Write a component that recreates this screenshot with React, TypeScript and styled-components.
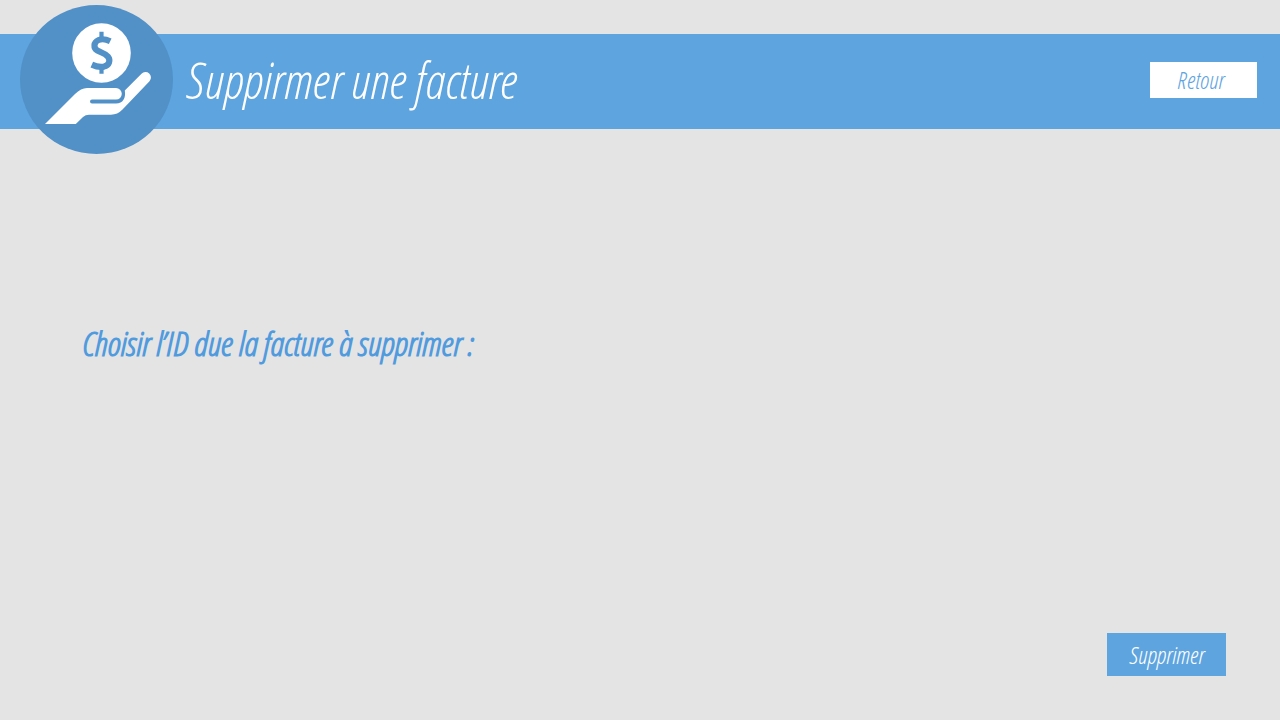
import React from 'react';
import styled, { createGlobalStyle } from 'styled-components';

const GlobalStyle = createGlobalStyle`
  *, *::before, *::after { box-sizing: border-box; }
  body {
    margin: 0;
    background: #e4e4e4;
    font-family: "Open Sans Condensed Light", "Roboto Condensed", "Liberation Sans", sans-serif;
    font-style: italic;
  }
`;

const Page = styled.div`
  display: flex;
  flex-direction: column;
  min-height: 100vh;
  padding-top: 34px;
`;

const Header = styled.header`
  display: flex;
  align-items: center;
  gap: 13px;
  min-height: 95px;
  padding: 0 23px 4px 20px;
  background: #5ea4df;
`;

const Logo = styled.svg`
  flex: none;
  width: 153px;
  height: 149px;
  margin: -29px 0;
`;

const Title = styled.h1`
  flex: 1;
  margin: 0;
  color: #fff;
  font-size: 50px;
  font-weight: 400;
  line-height: 60px;
`;

const Button = styled.button<{ $variant: 'light' | 'solid' }>`
  flex: none;
  width: ${({ $variant }) => ($variant === 'light' ? 107 : 119)}px;
  height: ${({ $variant }) => ($variant === 'light' ? 36 : 43)}px;
  padding: ${({ $variant }) => ($variant === 'light' ? '0 6px 0 0' : '0')};
  border: 0;
  background: ${({ $variant }) => ($variant === 'light' ? '#fff' : '#5ea4df')};
  color: ${({ $variant }) => ($variant === 'light' ? '#5ea4df' : '#fff')};
  font: inherit;
  font-size: 24px;
  line-height: 32px;
  cursor: pointer;
`;

const Main = styled.main`
  flex: 1;
  padding: 196px 82px 24px;
`;

const Prompt = styled.p`
  margin: 0;
  color: #509ade;
  font-size: 34px;
  font-weight: 600;
  line-height: 36px;
`;

const Actions = styled.footer`
  display: flex;
  justify-content: flex-end;
  padding: 0 54px 44px;
`;

function InvoiceLogo() {
  return (
    <Logo viewBox="20 5 153 149" aria-hidden="true">
      <ellipse cx="96.5" cy="79.5" rx="76.5" ry="74.5" fill="#5191c7" />
      <ellipse cx="101.5" cy="53" rx="29.3" ry="29.8" fill="#fff" />
      <g fill="none" stroke="#5191c7">
        <path
          d="M110.2 41.2C106 39.2 101.8 38.7 98.6 40C93.4 42.2 93.2 48 97.5 50.6C100.6 52.4 105.3 53.4 107.8 56.4C111 60.4 109 65.4 104 66.6C100 67.4 95.3 66.2 91.8 64.6"
          strokeWidth="6.2"
        />
        <path d="M101.5 31.8V39M101.5 67V73.8" strokeWidth="4.2" />
      </g>
      <path
        fill="#fff"
        d="M45 124L75 94Q81 88 87 88H116A5.8 5.8 0 0 1 116 99.6H92A2 2 0 0 0 92 103.6H116C123 103.6 126 98 124.8 90.5L141.5 73.8A5.4 5.4 0 0 1 149.5 81.2L122.5 109.5Q117.5 114.7 111 114.7H89Q85.5 114.7 83 117L75.8 124Z"
      />
    </Logo>
  );
}

export default function App() {
  return (
    <>
      <GlobalStyle />
      <Page>
        <Header>
          <InvoiceLogo />
          <Title>Suppirmer une facture</Title>
          <Button type="button" $variant="light">Retour</Button>
        </Header>
        <Main>
          <Prompt>Choisir l’ID due la facture à supprimer :</Prompt>
        </Main>
        <Actions>
          <Button type="button" $variant="solid">Supprimer</Button>
        </Actions>
      </Page>
    </>
  );
}
